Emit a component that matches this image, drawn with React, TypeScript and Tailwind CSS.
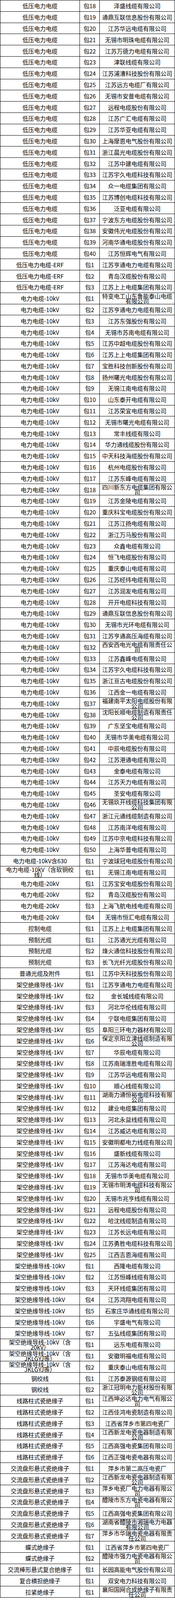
import React from "react"

type Row = [string, string, string]

// groups of rows that share the same product name
const groups: [string, [string, string][]][] = [
  ["低压电力电缆", [
    ["包18", "泽盛线缆有限公司"],
    ["包19", "通鼎互联信息股份有限公司"],
    ["包20", "江苏华远电缆有限公司"],
    ["包21", "无锡市明珠电缆有限公司"],
    ["包22", "江苏万德力电缆有限公司"],
    ["包23", "津联线缆有限公司"],
    ["包24", "江苏浦漕科技股份有限公司"],
    ["包25", "江苏远方电缆厂有限公司"],
    ["包26", "无锡市安普电缆有限公司"],
    ["包27", "远程电缆股份有限公司"],
    ["包28", "江苏广汇电缆有限公司"],
    ["包29", "江苏华亚电缆有限公司"],
    ["包30", "上海摩恩电气股份有限公司"],
    ["包31", "浙江晨光电缆股份有限公司"],
    ["包32", "江苏中建电缆有限公司"],
    ["包33", "江苏宇久电缆科技有限公司"],
    ["包34", "众一电缆集团有限公司"],
    ["包35", "江苏博创电缆科技有限公司"],
    ["包36", "泛亚电缆有限公司"],
    ["包37", "宁波东方电缆股份有限公司"],
    ["包38", "安徽伟光电缆股份有限公司"],
    ["包39", "河南华通电缆股份有限公司"],
    ["包40", "江苏恒辉电气有限公司"],
  ]],
  ["低压电力电缆-ERF", [
    ["包1", "江苏亨通电力电缆有限公司"],
    ["包2", "青岛汉缆股份有限公司"],
    ["包3", "江苏上上电缆集团有限公司"],
  ]],
  ["电力电缆-10kV", [
    ["包1", "特变电工山东鲁能泰山电缆有限公司"],
    ["包2", "江苏亨通电力电缆有限公司"],
    ["包3", "江苏东强股份有限公司"],
    ["包4", "无锡市苏南电缆有限公司"],
    ["包5", "江苏中超电缆股份有限公司"],
    ["包6", "江苏上上电缆集团有限公司"],
    ["包7", "宝胜科技创新股份有限公司"],
    ["包8", "扬州曙光电缆股份有限公司"],
    ["包9", "无锡江南电缆有限公司"],
    ["包10", "山东泰开电缆有限公司"],
    ["包11", "江苏荣宜电缆有限公司"],
    ["包12", "无锡市曙光电缆有限公司"],
    ["包13", "常丰线缆有限公司"],
    ["包14", "华力通线缆股份有限公司"],
    ["包15", "中天科技海缆股份有限公司"],
    ["包16", "杭州电缆股份有限公司"],
    ["包17", "江苏东峰电缆有限公司"],
    ["包18", "四川新东方电缆集团有限公司"],
    ["包19", "江苏金陵电缆有限公司"],
    ["包20", "重庆科宝电缆股份有限公司"],
    ["包21", "江苏江扬电缆有限公司"],
    ["包22", "浙江万马股份有限公司"],
    ["包23", "众鑫电缆有限公司"],
    ["包24", "恒飞电缆股份有限公司"],
    ["包25", "重庆泰山电缆有限公司"],
    ["包26", "江苏经纬电缆有限公司"],
    ["包27", "江苏润发电缆有限公司"],
    ["包28", "开开电缆科技有限公司"],
    ["包29", "通鼎互联信息股份有限公司"],
    ["包30", "无锡市光环电缆有限公司"],
    ["包31", "江苏亨通高压海缆有限公司"],
    ["包32", "西安西电光电缆有限责任公司"],
    ["包33", "江苏鑫峰电缆有限公司"],
    ["包34", "江苏宇久电缆科技有限公司"],
    ["包35", "浙江亘古电缆股份有限公司"],
    ["包36", "江西金一电缆有限公司"],
    ["包37", "福建南平太阳电缆股份有限公司"],
    ["包38", "沈阳长顺电缆制造有限责任公司"],
    ["包39", "广东坚宝电缆有限公司"],
    ["包40", "无锡市华美电缆有限公司"],
    ["包41", "中辰电缆股份有限公司"],
    ["包42", "江苏港通电缆有限公司"],
    ["包43", "金泰电缆有限公司"],
    ["包44", "江苏天力电缆有限公司"],
    ["包45", "圣安电缆有限公司"],
    ["包46", "无锡玖开线缆科技集团有限公司"],
    ["包47", "浙江元通线缆制造有限公司"],
    ["包48", "江苏南洋电缆有限公司"],
    ["包49", "江苏中京电缆科技有限公司"],
    ["包50", "上海华普电缆有限公司"],
  ]],
  ["电力电缆-10kV含630", [["包1", "宁波球冠电缆股份有限公司"]]],
  ["电力电缆-10kV（含软铜绞线）", [["包1", "无锡江南电缆有限公司"]]],
  ["电力电缆-20kV", [
    ["包1", "江苏宝安电缆股份有限公司"],
    ["包2", "青岛汉缆股份有限公司"],
    ["包3", "上海飞航电线电缆有限公司"],
    ["包4", "无锡市恒汇电缆有限公司"],
  ]],
  ["控制电缆", [["包1", "江苏上上电缆集团有限公司"]]],
  ["预制光缆", [
    ["包1", "江苏通光光缆有限公司"],
    ["包2", "烽火通信科技股份有限公司"],
    ["包3", "长飞光纤光缆股份有限公司"],
  ]],
  ["普通光缆及附件", [["包1", "江苏中天科技股份有限公司"]]],
  ["架空绝缘导线-1kV", [
    ["包1", "江苏亨通电力电缆有限公司"],
    ["包2", "金长城线缆有限公司"],
    ["包3", "河北华伦线缆有限公司"],
    ["包4", "宁联电缆集团有限公司"],
    ["包5", "阜阳三环电力器材有限公司"],
    ["包6", "保定京阳立津线缆制造有限公司"],
    ["包7", "华辰电缆有限公司"],
    ["包8", "江苏南瑞淮胜电缆有限公司"],
    ["包9", "江苏华远电缆有限公司"],
    ["包10", "顺心线缆有限公司"],
    ["包11", "湖南力通恒裕电缆科技有限公司"],
    ["包12", "建业电缆集团有限公司"],
    ["包13", "河北永益线缆有限公司"],
    ["包14", "江苏威达电缆有限公司"],
    ["包15", "安徽明都电力线缆有限公司"],
    ["包16", "盛新线缆有限公司"],
    ["包17", "江苏海达电缆有限公司"],
    ["包18", "无锡市华美电缆有限公司"],
    ["包19", "无锡市明涛电缆科技有限公司"],
    ["包20", "无锡市兆亨线缆有限公司"],
    ["包21", "远程电缆股份有限公司"],
    ["包22", "哈沈线缆制造有限公司"],
    ["包23", "江苏长远电缆有限公司"],
    ["包24", "江苏勇胜电缆科技有限公司"],
    ["包25", "江西吉恩海缆有限公司"],
  ]],
  ["架空绝缘导线-10kV", [
    ["包1", "西隆电缆有限公司"],
    ["包2", "江苏恒峰线缆有限公司"],
    ["包3", "天环线缆集团有限公司"],
    ["包4", "江苏鸿翔电缆有限公司"],
    ["包5", "石家庄华通线缆有限公司"],
    ["包6", "宇盛电气有限公司"],
    ["包7", "五弘线缆集团有限公司"],
  ]],
  ["架空绝缘导线-10kV（含20kV）", [["包1", "远东电缆有限公司"]]],
  ["架空绝缘导线-10kV（含JKLGYJ等）", [
    ["包1", "安徽明福电缆有限公司"],
    ["包2", "重庆泰山电缆有限公司"],
  ]],
  ["钢绞线", [
    ["包1", "江苏泰源钢缆有限公司"],
    ["包2", "浙江冠明电力新材股份有限公司"],
  ]],
  ["线路柱式瓷绝缘子", [
    ["包1", "江西坤必达电力电气有限公司"],
    ["包2", "江西佳鸿电瓷制造有限公司"],
    ["包3", "江西省萍乡市第四电瓷厂"],
    ["包4", "江西新龙电瓷电器制造有限公司"],
    ["包5", "江西高强电瓷集团有限公司"],
    ["包6", "江西正强电瓷电器有限公司"],
  ]],
  ["交流盘形悬式瓷绝缘子", [
    ["包1", "萍乡市第二高压电瓷厂"],
    ["包2", "江西新龙电瓷电器制造有限公司"],
    ["包3", "萍乡电瓷厂电力电器有限公司"],
    ["包4", "醴陵市东方电瓷电器有限公司"],
    ["包5", "江西高强电瓷集团有限公司"],
    ["包6", "湖南省醴陵市湘瑞电力电器有限公司"],
    ["包7", "萍乡市华瑞电瓷电器有限责任公司"],
  ]],
  ["蝶式绝缘子", [
    ["包1", "江西省萍乡市第四电瓷厂"],
    ["包2", "醴陵市强力电瓷电器有限公司"],
  ]],
  ["交流棒形悬式复合绝缘子", [["包1", "长园高能电气股份有限公司"]]],
  ["复合横担绝缘子", [["包1", "双安电力科技有限公司"]]],
  ["拉紧绝缘子", [["包1", "襄阳国网合成绝缘子有限责任公司"]]],
]

const rows: Row[] = groups.flatMap(([name, items]) =>
  items.map(([pkg, company]) => [name, pkg, company] as Row)
)

const cell =
  "min-w-0 border-r border-b border-black flex items-center justify-center text-center px-1"

export default function App() {
  return (
    <div className="w-[449px] bg-white text-black text-[15px] leading-[13px] [font-family:'Noto_Sans_CJK_SC','Liberation_Sans',sans-serif]">
      <div className="grid grid-cols-[204px_51px_193px] auto-rows-[28.8px] border-l border-t border-black">
        {rows.map(([name, pkg, company], i) => (
          <React.Fragment key={i}>
            <div className={cell}>{name}</div>
            <div className={cell}>{pkg}</div>
            <div className={cell}>{company}</div>
          </React.Fragment>
        ))}
      </div>
    </div>
  )
}
